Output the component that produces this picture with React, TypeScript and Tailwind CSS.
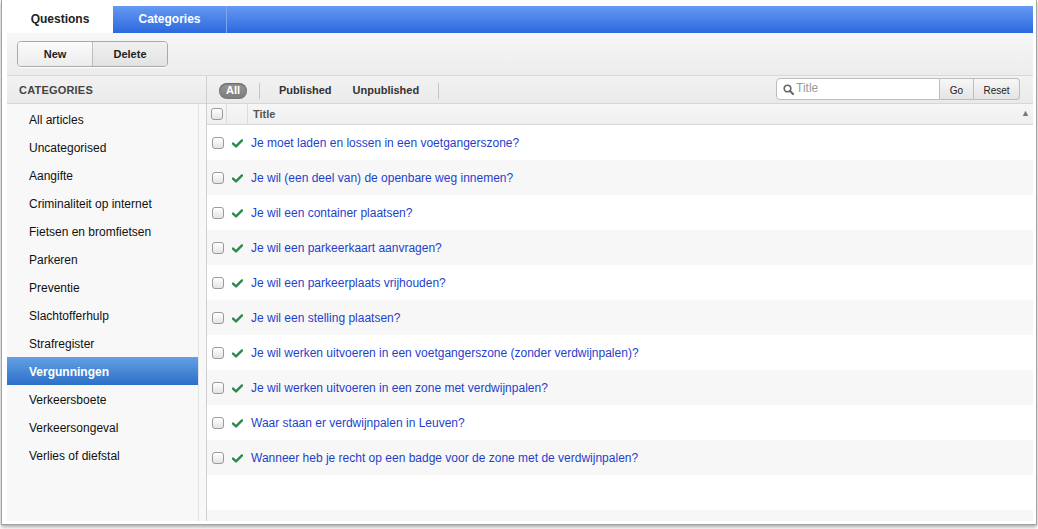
import React from 'react';

const categories = [
  'All articles',
  'Uncategorised',
  'Aangifte',
  'Criminaliteit op internet',
  'Fietsen en bromfietsen',
  'Parkeren',
  'Preventie',
  'Slachtofferhulp',
  'Strafregister',
  'Vergunningen',
  'Verkeersboete',
  'Verkeersongeval',
  'Verlies of diefstal',
];

const questions = [
  'Je moet laden en lossen in een voetgangerszone?',
  'Je wil (een deel van) de openbare weg innemen?',
  'Je wil een container plaatsen?',
  'Je wil een parkeerkaart aanvragen?',
  'Je wil een parkeerplaats vrijhouden?',
  'Je wil een stelling plaatsen?',
  'Je wil werken uitvoeren in een voetgangerszone (zonder verdwijnpalen)?',
  'Je wil werken uitvoeren in een zone met verdwijnpalen?',
  'Waar staan er verdwijnpalen in Leuven?',
  'Wanneer heb je recht op een badge voor de zone met de verdwijnpalen?',
];

const Checkbox: React.FC = () => (
  <span className="block w-[12px] h-[12px] rounded-[3px] border border-[#9a9a9a] bg-gradient-to-b from-white to-[#e4e4e4] shadow-[inset_0_1px_0_#fff]" />
);

const Check: React.FC = () => (
  <svg width="11" height="9" viewBox="0 0 11 9">
    <path d="M1 4.6 L4 7.4 L10 1.4" fill="none" stroke="#2a8a4e" strokeWidth="2.4" strokeLinecap="round" strokeLinejoin="round" />
  </svg>
);

const App: React.FC = () => {
  const selected = 'Vergunningen';

  return (
    <div className="w-[1038px] h-[529px] bg-white overflow-hidden font-['Liberation_Sans',Arial,sans-serif]">
      <div className="ml-[1px] w-[1036px] h-[525px] bg-white border-l border-r border-b border-[#a3a3a3] shadow-[0_2px_4px_rgba(0,0,0,0.35)] pt-[6px] pl-[5px] pr-[3px] pb-[3px] flex flex-col">
        {/* tabs */}
        <div className="h-[27px] flex shrink-0">
          <div className="w-[106px] bg-white flex items-center justify-center pb-[2px] text-[12px] font-bold text-[#222]">Questions</div>
          <div className="flex-1 flex bg-gradient-to-b from-[#6699f2] to-[#2b68de]">
            <div className="w-[114px] border-r border-[#7ea6ee] flex items-center justify-center pb-[2px] text-[12px] font-bold text-white">Categories</div>
          </div>
        </div>

        {/* toolbar */}
        <div className="h-[43px] shrink-0 bg-gradient-to-b from-[#f7f7f7] to-[#ececec] border-b border-[#d9d9d9] flex items-center pl-[10px]">
          <div className="flex h-[26px] rounded-[4px] border border-[#a9a9a9] overflow-hidden shadow-[0_1px_0_#fff]">
            <button className="w-[75px] bg-gradient-to-b from-[#fbfbfb] to-[#ececec] border-r border-[#bdbdbd] text-[11px] font-bold text-[#222]">New</button>
            <button className="w-[74px] bg-gradient-to-b from-[#f0f0f0] to-[#e3e3e3] text-[11px] font-bold text-[#222]">Delete</button>
          </div>
        </div>

        <div className="flex flex-1 min-h-0">
          {/* sidebar */}
          <div className="w-[200px] shrink-0 flex flex-col border-r border-[#cfcfcf] bg-[#f8f8f8]">
            <div className="h-[28px] shrink-0 bg-gradient-to-b from-[#f2f2f2] to-[#eaeaea] border-b border-[#d6d6d6] flex items-center pl-[12px] pt-[2px] text-[11px] font-bold text-[#444] tracking-[0.2px]">
              CATEGORIES
            </div>
            <div className="flex-1 flex">
              <div className="w-[192px] border-r border-[#e2e2e2] pt-[1px]">
                {categories.map(c => (
                  <div
                    key={c}
                    className={`h-[28px] flex items-center pl-[22px] pt-[2px] text-[12px] ${c === selected ? 'bg-gradient-to-b from-[#63a0e4] to-[#2c6fc8] text-white font-bold' : 'text-[#111]'}`}
                  >
                    {c}
                  </div>
                ))}
              </div>
            </div>
          </div>

          {/* main */}
          <div className="flex-1 flex flex-col min-w-0">
            <div className="h-[28px] shrink-0 bg-gradient-to-b from-[#f2f2f2] to-[#eaeaea] border-b border-[#d6d6d6] flex items-center pl-[12px] pr-[13px]">
              <span className="h-[16px] w-[28px] mt-[2px] rounded-full bg-gradient-to-b from-[#9a9a9a] to-[#7a7a7a] shadow-[inset_0_1px_2px_rgba(0,0,0,0.4)] text-white text-[11px] font-bold flex items-center justify-center">All</span>
              <span className="w-px h-[16px] mt-[2px] bg-[#c6c6c6] ml-[12px]" />
              <span className="ml-[19px] pt-[2px] text-[11px] font-bold text-[#333]">Published</span>
              <span className="ml-[21px] pt-[2px] text-[11px] font-bold text-[#333]">Unpublished</span>
              <span className="w-px h-[16px] mt-[2px] bg-[#c6c6c6] ml-[19px]" />
              <div className="ml-auto flex h-[22px] self-start mt-[2px]">
                <div className="w-[164px] bg-white border border-[#bdbdbd] rounded-l-[4px] flex items-center pl-[6px] gap-[2px]">
                  <svg width="11" height="11" viewBox="0 0 11 11">
                    <circle cx="4.5" cy="4.5" r="3.3" fill="none" stroke="#666" strokeWidth="1.6" />
                    <path d="M7 7 L10 10" stroke="#666" strokeWidth="2" strokeLinecap="round" />
                  </svg>
                  <span className="text-[12px] text-[#9a9a9a] pb-[2px]">Title</span>
                </div>
                <button className="w-[34px] pt-[2px] bg-gradient-to-b from-[#f7f7f7] to-[#e4e4e4] border-y border-r border-[#bdbdbd] text-[10px] text-[#222]">Go</button>
                <button className="w-[46px] pt-[2px] bg-gradient-to-b from-[#f7f7f7] to-[#e4e4e4] border-y border-r border-[#bdbdbd] rounded-r-[4px] text-[10px] text-[#222]">Reset</button>
              </div>
            </div>

            {/* table header */}
            <div className="h-[21px] shrink-0 flex bg-gradient-to-b from-[#f6f6f6] to-[#efefef] border-b border-[#d8d8d8]">
              <div className="w-[20px] border-r border-[#dcdcdc] flex items-center justify-center"><Checkbox /></div>
              <div className="w-[21px] border-r border-[#dcdcdc]" />
              <div className="flex-1 flex items-center pl-[5px] pr-[3px] text-[11px] font-bold text-[#555]">
                <span>Title</span>
                <span className="ml-auto text-[9px] text-[#777]">▲</span>
              </div>
            </div>

            {/* rows */}
            <div className="flex-1 overflow-hidden">
              {[...questions, '', ''].map((q, i) => (
                <div key={i} className={`h-[35px] flex items-center ${i % 2 === 1 ? 'bg-[#f7f7f7]' : 'bg-white'}`}>
                  {q && (
                    <>
                      <div className="w-[20px] flex justify-center pl-[1px]"><Checkbox /></div>
                      <div className="w-[21px] flex justify-center pt-[1px]"><Check /></div>
                      <a className="pl-[3px] text-[12px] text-[#1f3fcc]">{q}</a>
                    </>
                  )}
                </div>
              ))}
            </div>
          </div>
        </div>
      </div>
    </div>
  );
};

export default App;
